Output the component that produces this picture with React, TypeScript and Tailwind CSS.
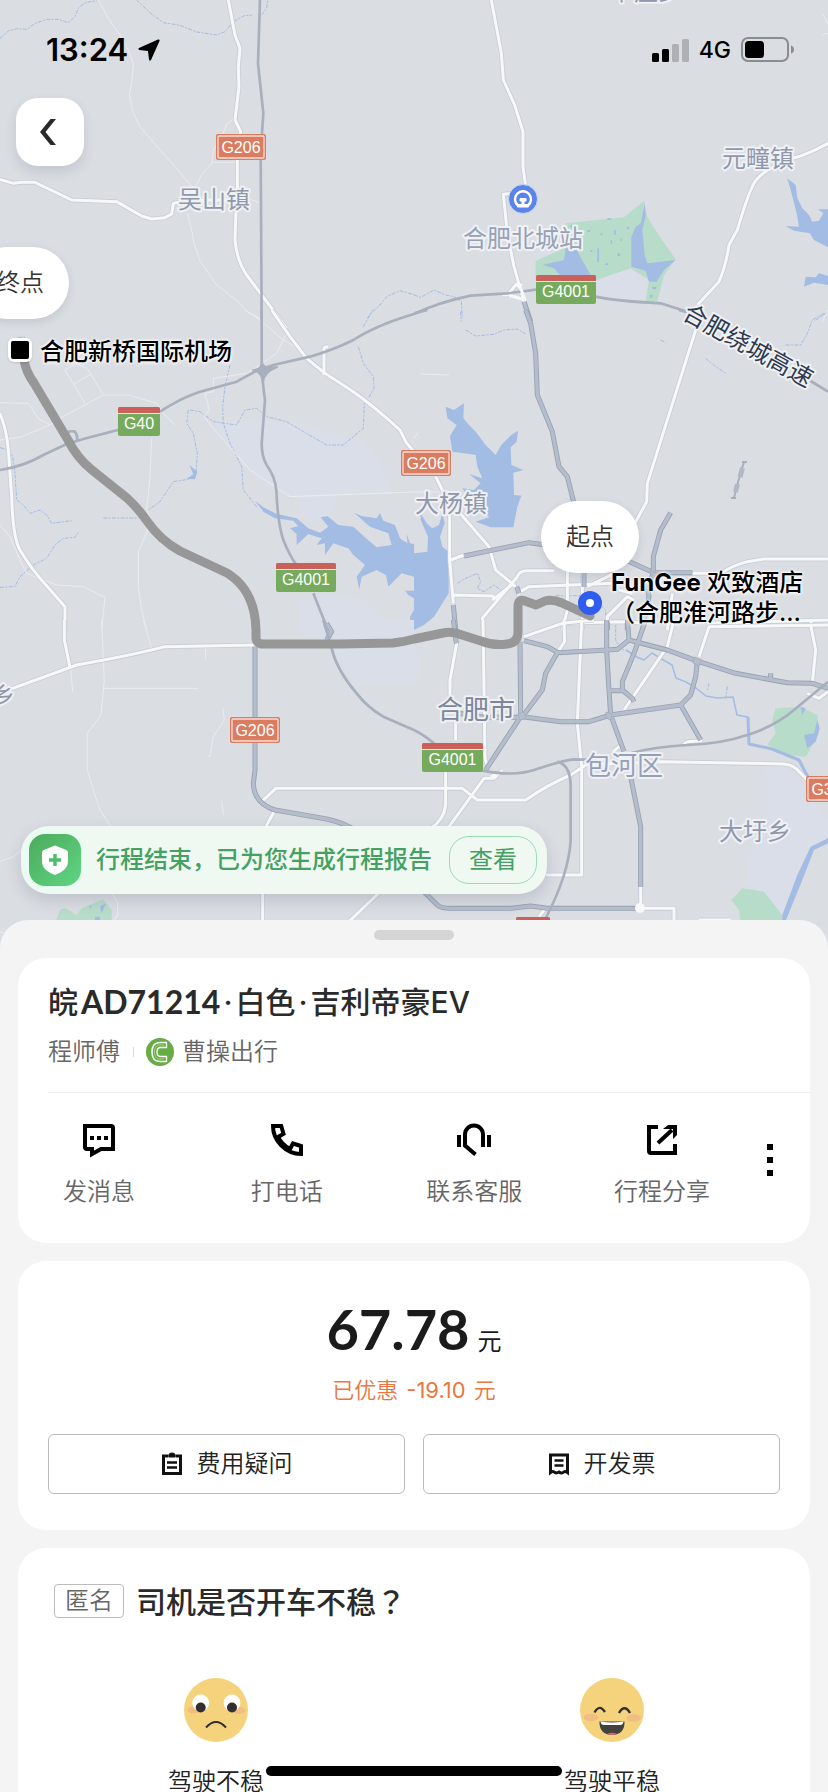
import type { ReactNode } from "react"

const CJK = "font-['Inter','Noto_Sans_CJK_SC',sans-serif]"

type Sheet = {
  x: number
  y: number
  areas?: string
  parks?: string
  water?: string
  streams?: string
  lanes?: string
  highways?: string
  roads?: string
  trunks?: string
}

// The map is stored as sheets drawn at triple size
const sheets: Sheet[] = [
  {
    x: 0,
    y: 0,
    streams:
      "M0 115 25 93 50 86 80 88 105 70 140 58 175 58 205 68 225 50 235 25 255 8 290 2M410 0 450 38 490 68 540 76 590 96 650 105 675 95 700 65 735 46 755 46M785 45 800 25 803 0M1102 955 1118 935 1140 915 1160 890 1200 872 1242 884",
    lanes:
      "M295 0 325 55 360 105 385 150 400 190 395 250 388 285 400 340 420 380 480 450 530 505 575 560M588 556 608 520 635 490 640 450 665 410 682 370 705 352M635 487H712M562 640 575 690 582 730 600 782 650 855 715 905 740 935 780 955M750 598 785 610",
    roads:
      "M685 0 705 105 720 145 715 200 717 260 705 360 722 395 712 450 712 560 707 660 705 720Q710 780 740 825L800 905 860 985M0 538 40 550 65 547H105L215 600 350 605 425 648 455 657 495 653 515 642 520 610 560 600H700",
    highways: "M780 0 774 190 790 340 782 460 785 960",
  },
  {
    x: 414,
    y: 0,
    areas: "M365 780 380 735 440 720 650 800 695 850 690 905 545 885 365 860Z",
    parks:
      "M365 782 440 750 455 670 630 652 690 603 700 650 730 700 785 778 750 825 730 905H695L705 840 650 805 548 840 365 840Z",
    water:
      "M385 795 450 780 455 745 485 745 510 790 530 825 440 828 420 805ZM652 710 665 680 680 670 692 610 695 650 685 690 692 765 700 790 785 780 750 810 728 845H705L695 812 652 800ZM480 700h4v10h-4zM550 745h5v40h-5zM520 690h8v6h-8zM600 690h5v14h-5zM610 760h8v8h-8zM580 655h12v5h-12zM560 700h5v6h-5zM640 680h5v8h-5zM590 720h4v12h-4zM575 790h8v5h-8zM530 750h5v6h-5zM470 675h5v9h-5zM620 715h4v8h-4zM715 860h12v8h-12zM708 885h8v8h-8zM1115 678 1155 680 1148 640 1138 600 1130 570 1120 535 1145 555 1150 595 1165 625 1185 645 1195 665 1215 662 1228 640 1212 628H1242V742L1200 720 1188 700 1140 692ZM1170 860 1175 830 1205 832 1215 820 1242 828V855L1200 848Z",
    streams: "M0 885 20 892 60 870 95 885 120 890 142 905 145 950M1205 960 1242 935",
    roads:
      "M232 0 262 160 268 240 302 315 327 395 327 500 335 560M290 580 268 583 280 700 300 800 330 905M325 855 305 855 280 885 265 885M1242 430Q1180 465 1135 475L1080 500Q1030 525 1015 560 1000 590 970 690L945 735Q935 800 915 845L850 915",
    trunks: "M330 905 350 965",
    highways: "M0 942Q80 905 170 887L280 880 390 866 545 890Q600 903 740 910L820 935",
    lanes: "M1225 40 1242 70M1225 105 1242 100",
  },
  {
    x: 0,
    y: 310,
    areas:
      "M640 335 790 330 900 340 1085 395 1130 440 1170 545 1010 560 990 620 910 630 890 565 780 520 700 430ZM895 870 1040 850 1090 870 1200 960 1242 1000 1235 1115 1070 1125 1000 1010 895 960Z",
    streams:
      "M55 82H75M0 413 25 420 38 440 45 490 50 570 70 585 90 610 120 600 140 615 155 640 215 632M310 624H415M0 832 45 830 60 800 100 765 140 745 165 705 190 685 225 682 237 665M565 300 560 340 580 370 592 430 588 490 565 508 520 515 500 545 480 575 445 600M690 165 675 230 668 290 670 340 690 400 725 470 730 540 770 590M570 300 600 305 640 335 710 345 735 300 770 295 800 320 860 335 910 365 980 405H1030L1090 355 1093 280M1075 110 1090 160 1120 200 1122 235 1105 265M1090 50 1118 0",
    water:
      "M765 572 790 592 830 612 890 625 925 655 960 668 985 650 962 622 982 618 1015 645 1060 650 1110 695 1130 712 1175 705 1165 670 1110 650 1062 608 1085 618 1130 625 1140 610 1150 632 1185 645 1200 685 1222 700 1220 672 1230 700 1242 702V800L1205 790 1165 830 1158 795 1130 780 1085 800 1078 838 1070 800 1095 765 1060 735 1045 715 1000 700 975 735V700L950 705 965 685 925 672 890 705 890 672 870 655 895 648 880 632 825 625 790 605ZM568 465 592 485 585 508 560 507 580 492ZM1215 842 1242 842V865L1225 855ZM1230 920 1242 900V945L1232 940Z",
    lanes:
      "M195 180 255 280M195 180 230 160 265 180 310 255M222 222 272 193M180 325 310 255 385 255 420 265 470 280 490 310 525 345M0 278 85 280 115 325 150 345M0 390 60 382 150 345 180 325M455 385 450 500 440 600 450 625 440 670 415 725 415 830 425 900 440 960M0 645 30 680 60 750 80 790 170 825 250 830 315 862 305 960M780 165 740 190 640 205V245L615 250 628 300 612 318 640 355 750 480 870 560 1242 546M735 0 780 30 850 90 905 120M860 70 830 130 780 165",
    roads:
      "M0 310Q20 360 25 420L35 560Q38 680 60 720 90 770 120 805L195 890V960M815 0 870 80 920 145 975 190 1060 245Q1130 295 1200 360L1220 400 1245 428M972 195V120Q970 110 985 110",
    highways:
      "M785 0V150Q785 200 795 270L785 400Q785 440 800 465 825 500 829 540 833 640 850 690 870 740 890 765M940 850 980 950M0 480Q70 470 130 435L200 402 250 387 365 357M480 305Q540 265 600 245L710 215 770 182 820 165 930 140Q1000 120 1060 90 1130 45 1242 12M195 375Q205 360 225 365 235 380 230 390",
  },
  {
    x: 414,
    y: 310,
    streams:
      "M140 5 142 35M155 60 185 78 240 73 270 60 310 57 335 72M740 90 755 98M875 145 905 170 935 190M1115 105 1160 105 1180 70 1195 30 1235 8M130 820 155 805 190 790 200 815 190 835 210 845 240 825 275 850M425 857H500M560 885 575 900V925",
    lanes: "M18 192 105 195M0 385 12 367M0 546H100M1242 0 1225 35",
    water:
      "M95 290 120 300 138 288 150 280 148 325 165 345 185 365 215 405 245 435 262 405 292 375 312 362 308 395 290 412 292 465 328 480 298 488 300 555 322 557 310 590 298 652 230 652 185 635 225 622 205 590 170 570 145 535 180 540 200 520 165 492 205 505 190 470 185 435 150 430 115 425 108 378 128 345 100 325ZM20 610 38 640 55 655 75 645 85 610 92 640 78 680 85 710 104 725 104 850 60 920 30 945 0 960V730L40 725 42 680 20 630Z",
    parks: "M35 840 65 820 75 850 55 895 40 895 30 870Z",
    roads:
      "M65 500 95 560 225 710 245 780 300 825 315 855M107 610V750L118 880M110 750 150 735M845 60 700 520 698 575 660 645M120 855 235 858 245 865M205 960V925L310 800Q315 782 340 782H420M310 850 345 830 600 820M460 770V900L445 960M520 830 600 790M445 940 620 935 700 940M505 780V960M660 870 640 860 580 920V960M880 940 1242 930M775 850 760 960M655 850 615 840M725 790H920Q960 765 1000 755L1050 747H1242M1190 930 1195 960M300 820 235 870",
    trunks:
      "M335 0 350 40 365 130 370 255 415 365 435 470 460 500 480 580M150 738 345 698 390 704M640 752 720 788H835M770 608 740 660 718 740V790L700 830 705 860 685 960M510 790V830M118 885 125 960M315 850 308 830M580 935V960M640 940V960",
    highways: "M0 10 40 0M1185 210 1242 245M795 0 815 6",
  },
  {
    x: 0,
    y: 620,
    areas: "M895 0H1242V190L1065 195 1020 130 1000 90 895 30Z",
    parks: "M168 902 180 870 195 863 230 885 245 865 310 838 335 870V902Z",
    water: "M300 860 318 850 305 880ZM285 890h15v12h-15zM268 858h6v5h-6z",
    lanes:
      "M305 0 310 120 313 180 303 285 262 340 262 450 280 510 300 570 332 618M310 205H595M617 85V120M430 0 455 85M212 145 218 215M668 262 673 300 640 350 630 410 622 405M665 543 670 585M0 725 40 710 65 690M335 820 353 845V885L340 902M0 935 15 940",
    roads: "M193 0V60L210 142M30 208 230 135Q400 105 495 80L765 75M825 505H1242M785 545 830 503M825 570 795 625M788 820V905M1135 820 1050 902",
    trunks: "M765 80V450L760 490Q762 550 825 570L980 597Q1040 610 1080 640M980 10 995 35 980 60",
    highways: "M970 0 995 85Q1010 150 1070 220 1100 260 1150 290L1242 330",
  },
  {
    x: 414,
    y: 620,
    areas: "M1055 440 1110 438 1180 500 1210 560 1242 600V650L1195 690 1105 890 1020 800 990 790 1020 650 1065 560ZM0 90 14 95V180L0 190Z",
    parks:
      "M1085 265 1160 260 1210 285 1215 340 1190 385 1175 410 1125 405 1060 375 1085 340 1075 300ZM952 840 985 805 1050 815 1105 885 1110 902H980L975 870Z",
    water:
      "M1105 885 1150 765 1190 680 1242 655V670L1200 690 1165 780 1115 902H1105ZM1170 345 1200 340 1210 300 1217 325 1205 365 1180 385ZM1160 260 1175 265 1165 285ZM0 0H14L0 15Z",
    streams: "M605 0V60L620 85 635 92M885 190 880 210M940 200 935 235",
    roads:
      "M130 60 108 180V225M125 300V360M207 0 213 410Q215 435 228 440M330 50 445 10 540 0M450 0 452 65 435 90M503 0 490 310 503 440V765H395M780 0 760 80 630 270M855 110 885 20 1242 15M1190 15 1205 90 1195 190M1180 220 1215 235 1242 215M800 380 820 365 865 362M635 395 615 380 597 395M230 470 265 455M265 450 240 475 210 475 105 620M0 505H145L190 540H335Q400 495 470 465L515 435 740 425 1110 432Q1140 435 1155 455L1185 485M95 455V555Q90 600 50 625M680 800V870M660 865H780V902M400 858 375 890M855 900H950",
    trunks:
      "M118 0 127 70M318 65 320 290 215 450M330 62 400 80 432 98 580 90 610 88 645 60 760 90 855 125 965 160 1120 188 1195 190 1242 205M432 95 395 160 385 210 325 290 440 305H525L590 285 800 255 830 225 845 170 850 125M578 0V90L585 210 590 285 630 395M640 0 645 60M695 0 660 100 625 185V212H590M625 210 655 235 660 245M800 255 860 360M135 280 210 292H325M650 470 680 620V800M30 815 70 855Q80 865 110 865H290L350 858 400 865H670M1070 160V175",
    highways:
      "M0 330Q40 350 70 380M205 452Q300 470 360 450 450 420 480 418L560 420M650 400Q720 380 820 375 920 372 1000 345 1080 320 1140 270L1242 185M430 425Q470 435 470 500V660Q465 760 395 895",
  },
]

const placeNames = [
  { name: "下庄乡", x: 610, y: 0, className: "text-2xl", fill: "#8f98ab" },
  { name: "吴山镇", x: 178, y: 208, className: "text-2xl", fill: "#8f98ab" },
  { name: "元疃镇", x: 722, y: 167, className: "text-2xl", fill: "#8f98ab" },
  { name: "合肥北城站", x: 463, y: 247, className: "text-2xl", fill: "#97a1b6" },
  { name: "大杨镇", x: 415, y: 512, className: "text-2xl", fill: "#8f98ab" },
  { name: "合肥市", x: 437, y: 719, className: "text-[26px]", fill: "#7d879b" },
  { name: "包河区", x: 585, y: 775, className: "text-[26px]", fill: "#94a0b8" },
  { name: "大圩乡", x: 719, y: 840, className: "text-2xl", fill: "#8f98ab" },
  { name: "乡", x: -9, y: 704, className: "text-2xl", fill: "#8f98ab" },
]

function NationalShield({ x, y, label }: { x: number; y: number; label: string }) {
  return (
    <g transform={`translate(${x} ${y})`}>
      <rect width="50" height="26" rx="2" fill="#d97c60" />
      <rect x="2" y="2" width="46" height="22" rx="1" fill="none" stroke="#f5ddd5" strokeWidth="1.3" />
      <text x="25" y="19" textAnchor="middle" fill="#fff" className="font-['Liberation_Sans',sans-serif] text-base">
        {label}
      </text>
    </g>
  )
}

function ExpressShield({ x, y, width, label }: { x: number; y: number; width: number; label?: string }) {
  return (
    <g transform={`translate(${x} ${y})`}>
      <rect width={width} height="29" rx="2" fill="#76ab5d" />
      <path d={`M0 6V2Q0 0 2 0H${width - 2}Q${width} 0 ${width} 2V6Z`} fill="#cb605b" />
      <path d={`M0 6.5H${width}`} stroke="#e9efe6" />
      {label && (
        <text x={width / 2} y="22" textAnchor="middle" fill="#fff" className="font-['Liberation_Sans',sans-serif] text-base">
          {label}
        </text>
      )}
    </g>
  )
}

function CityMap() {
  return (
    <svg
      className={`absolute inset-0 h-full w-full ${CJK}`}
      viewBox="0 0 828 950"
      preserveAspectRatio="xMidYMin slice"
      fill="none"
      strokeLinejoin="round"
      aria-label="行程地图"
    >
      <rect width="828" height="950" fill="#dadde2" />
      {sheets.map((s) => (
        <g key={`land-${s.x}-${s.y}`} transform={`translate(${s.x} ${s.y}) scale(0.33333)`}>
          <path d={s.areas} fill="#dadee8" />
          <path d={s.parks} fill="#b8dcca" />
          <path d={s.water} fill="#a3bce4" />
          <path d={s.streams} stroke="#a3bce4" strokeWidth="3" strokeDasharray="12 4 6 4" />
          <path d={s.lanes} stroke="#eaecee" strokeWidth="3" />
        </g>
      ))}
      {/* Nanfei river */}
      <path
        d="M626 650 637 657 644 660 652 653 660 658 672 665 676 678 686 682 696 688 706 696 717 698 733 697 737 715 748 717"
        stroke="#a3bce4"
        strokeWidth="1.5"
      />
      <path d="M748 717 749 744 772 749 799 760 809 779" stroke="#a3bce4" strokeWidth="3" />
      {sheets.map((s) => (
        <g key={`road-${s.x}-${s.y}`} transform={`translate(${s.x} ${s.y}) scale(0.33333)`}>
          <path d={s.roads} stroke="#c9ccd7" strokeWidth="14" />
          <path d={s.roads} stroke="#f7f9f9" strokeWidth="9" />
        </g>
      ))}
      {sheets.map((s) => (
        <g key={`trunk-${s.x}-${s.y}`} transform={`translate(${s.x} ${s.y}) scale(0.33333)`}>
          <path d={s.trunks} stroke="#98a1b0" strokeWidth="15" />
          <path d={s.trunks} stroke="#b4bdcc" strokeWidth="10" />
          <path d={s.highways} stroke="#a8afbd" strokeWidth="8" />
        </g>
      ))}
      {/* interchanges */}
      <path d="M253 370Q262 370 262 361 262 370 277 367 264 372 263 382 262 372 253 370Z" fill="#a8afbd" stroke="#a8afbd" strokeWidth="2" />
      <path d="M516 283 521 289 525 300 512 296 509 296" stroke="#f7f9f9" strokeWidth="3" />
      <path d="M518 714 524 712 526 718 520 720ZM606 712l6 2-1 6-5-2ZM650 570l8 4-6 5ZM694 657l8 3-3 6-6-3Z" fill="#b4bdcc" stroke="#a8afbd" />
      <circle cx="640" cy="908" r="5" fill="#f7f9f9" />
      <path d="M744 462 738 482 734 498M742 467 740 476M738 484 735 493" stroke="#a8b0bf" strokeWidth="2" />
      <path d="M742.500 468 740 477M737.500 484 735.500 492" stroke="#b0b8c6" strokeWidth="5" />
      <path d="M742 462h5M731 498h5" stroke="#a8b0bf" strokeWidth="2" />

      <path
        d="M24 360Q26 372 34 383L68 440Q77 458 92 470L127 498Q138 508 147 521 160 540 180 551L227 573Q255 590 256 630V637Q256 644 263 644L340 644 393 643Q403 642 414 639L443 633Q452 631 462 635L481 641Q494 646 507 644 518 643 518 632V607Q518 598 525 601L536 605 545 601Q552 599 562 603L590 616"
        stroke="#979797"
        strokeWidth="9"
        strokeLinecap="round"
      />

      <g stroke="#eff1f4" strokeWidth="4" paintOrder="stroke">
        {placeNames.map((p) => (
          <text key={p.name + p.x} x={p.x} y={p.y} fill={p.fill} className={p.className}>
            {p.name}
          </text>
        ))}
        <text x="681" y="318" transform="rotate(29 681 318)" fill="#2f3b4e" className="text-2xl">
          合肥绕城高速
        </text>
      </g>

      <circle cx="523" cy="199" r="14.5" fill="#5b84ea" stroke="#c9d6f4" />
      <path d="M518 205.500A8 8 0 1 1 528 205.500" stroke="#fff" strokeWidth="2.400" />
      <path d="M521.500 190.500h3M520 198.500h6v2.500h-2v3.500h4.500v2.500h-11v-2.500h4.500v-3.500h-2Z" fill="#fff" stroke="#fff" strokeWidth="1" />

      <NationalShield x={216} y={134} label="G206" />
      <NationalShield x={401} y={450} label="G206" />
      <NationalShield x={230} y={717} label="G206" />
      <NationalShield x={806} y={776} label="G312" />
      <ExpressShield x={536} y={275} width={60} label="G4001" />
      <ExpressShield x={118} y={407} width={42} label="G40" />
      <ExpressShield x={276} y={563} width={60} label="G4001" />
      <ExpressShield x={422} y={743} width={61} label="G4001" />
      <ExpressShield x={516} y={917} width={34} />
    </svg>
  )
}

function StatusBar() {
  return (
    <div className="relative flex h-[98px] items-center justify-between pt-0.5 pr-[34px] pl-[46px] text-black">
      <div className="flex items-center gap-2.5">
        <span className="text-[31px] leading-10 font-semibold">13:24</span>
        <svg width="22" height="22" viewBox="0 0 22 22">
          <path d="M20 .5 1 9Q-.5 10.500 1.500 11L10 12 11 20.500Q11.500 22.500 13 21L21.500 2Q22 0 20 .5Z" />
        </svg>
      </div>
      <div className="flex items-center gap-2.5">
        <svg width="37" height="24" viewBox="0 0 37 24">
          <rect y="15" width="7" height="9" rx="1.500" />
          <rect x="10" y="11" width="7" height="13" rx="1.500" />
          <rect x="20" y="6" width="7" height="18" rx="1.500" fill="#aeb0b5" />
          <rect x="30" y="1" width="7" height="23" rx="1.500" fill="#aeb0b5" />
        </svg>
        <span className="text-[23px] leading-8 font-medium">4G</span>
        <svg width="53" height="26" viewBox="0 0 53 26">
          <rect x="1" y="1" width="46" height="23" rx="6" fill="none" stroke="#8a8c90" strokeWidth="2" />
          <rect x="4" y="4" width="19" height="17" rx="3.500" />
          <path d="M50 8.500Q53 9.500 53 12.500T50 16.500Z" fill="#8a8c90" />
        </svg>
      </div>
    </div>
  )
}

function ReportBanner() {
  return (
    <div className="relative ml-[21px] flex h-[68px] w-fit items-center rounded-[28px] bg-[#eff9f2] pr-2.5 pl-2 shadow-[0_6px_16px_rgba(70,80,110,0.2)]">
      <svg width="52" height="52" viewBox="0 0 52 52" className="rounded-2xl shadow-[0_0_6px_2px_#e3fff0]">
        <defs>
          <linearGradient id="report" x1="0" y1="0" x2="1" y2="1">
            <stop stopColor="#4bab5b" />
            <stop offset="1" stopColor="#60d584" />
          </linearGradient>
        </defs>
        <rect width="52" height="52" fill="url(#report)" />
        <path d="M26 11.500 36 15.500Q39 16 39 19V27C39 34 34 38 26 41 18 38 13 34 13 27V19Q13 16 16 15.500Z" fill="#fff" />
        <path d="M26 20V32M20 26H32" stroke="#50bd6c" strokeWidth="3.500" />
      </svg>
      <p className="ml-[15px] text-2xl leading-8 font-medium whitespace-nowrap text-[#45a063]">
        行程结束，已为您生成行程报告
      </p>
      <button className="ml-[17px] h-12 w-[88px] rounded-[20px] border border-[#9cdcb2] text-2xl leading-8 text-[#45a063]">
        查看
      </button>
    </div>
  )
}

function Action({ label, children }: { label: string; children: ReactNode }) {
  return (
    <button className="flex w-24 flex-col items-center gap-5">
      <svg width="32" height="32" viewBox="0 0 32 32" fill="none" stroke="#000" strokeWidth="4" className="overflow-visible">
        {children}
      </svg>
      <span className="text-2xl leading-8 font-[350] whitespace-nowrap text-[#666]">{label}</span>
    </button>
  )
}

function DriverCard() {
  return (
    <section className="rounded-[28px] bg-white pt-6 pb-[35px]">
      <div className="pl-[30px]">
        <h1 className="flex items-center gap-[3px] text-[30px] leading-10 font-medium text-[#2a2a2a]">
          <span>皖</span>
          <span className="font-['Lato',sans-serif] text-[32px] font-bold">AD71214</span>
          <span>·</span>
          <span>白色</span>
          <span>·</span>
          <span>吉利帝豪EV</span>
        </h1>
        <div className="mt-3.5 flex items-center border-b border-[#eee] pb-6 text-2xl leading-8 font-[350] text-[#666]">
          <span>程师傅</span>
          <span className="mr-3 ml-[13px] h-2.5 w-px bg-[#ddd]" />
          <svg width="28" height="28" viewBox="0 0 28 28" fill="none">
            <circle cx="14" cy="14" r="14" fill="#68ac45" />
            <path d="M21 4.500H14C8.500 4.500 6 8.500 6 14S8.500 23.500 14 23.500H21" stroke="#fff" strokeWidth="1.500" />
            <path d="M20.500 4.500V9.500H14.500C12 9.500 11 11.500 11 14S12 18.500 14.500 18.500H20.500V23.500" stroke="#fff" strokeWidth="1.300" />
            <path d="M18 7H14C10 7 8.500 10 8.500 14S10 21 14 21H18" stroke="#b9dba5" strokeWidth=".8" />
          </svg>
          <span className="ml-2">曹操出行</span>
        </div>
      </div>
      <div className="flex items-center pt-[31px] pl-[33px]">
        <div className="flex flex-1 justify-between">
          <Action label="发消息">
            <path d="M2 2H28Q30 2 30 4V25H18L9 30V25H4Q2 25 2 23Z" />
            <path d="M7 14H11M14 14H18M21 14H25" />
          </Action>
          <Action label="打电话">
            <path d="M2 2H10.200L12.500 9.800 7 13C9.500 18 14 22.500 19 25L22 19.500 30 22V30C15 30 2 17 2 2Z" />
          </Action>
          <Action label="联系客服">
            <path d="M25 23V10.500A9 9 0 0 0 7 10.500V21.500L17.500 30.500" />
            <path d="M1 11V23M31 11V23" />
          </Action>
          <Action label="行程分享">
            <path d="M12 3H3V27Q3 29 5 29H29V20M12 19 26 6" />
            <path d="M17 5 22 1H31V11L27 15V5Z" fill="#000" stroke="none" />
          </Action>
        </div>
        <button aria-label="更多" className="ml-5 flex w-20 flex-col items-center gap-[7px] self-start pt-5">
          <span className="size-1.5 bg-black" />
          <span className="size-1.5 bg-black" />
          <span className="size-1.5 bg-black" />
        </button>
      </div>
    </section>
  )
}

function FareCard() {
  const button =
    "flex h-[60px] items-center justify-center gap-3 rounded-md border border-[#bbb] text-2xl leading-8 font-[350] text-[#222]"
  return (
    <section className="rounded-[28px] bg-white px-[30px] pt-9 pb-9">
      <div className="flex h-16 items-baseline justify-center gap-2 text-[#1b1b1b]">
        <span className="font-['Lato',sans-serif] text-[56px] leading-16 font-bold">67.78</span>
        <span className="text-2xl leading-8">元</span>
      </div>
      <p className="mt-[13px] flex justify-center gap-2 text-[22px] leading-8 font-[350] text-[#ea7640]">
        <span>已优惠</span>
        <span className="font-normal">-19.10</span>
        <span>元</span>
      </p>
      <div className="mt-7 grid grid-cols-2 gap-[18px]">
        <button className={button}>
          <svg width="24" height="24" viewBox="0 0 24 24" fill="none" stroke="#111">
            <path d="M7.500 4H2.500V21.500H19.500V4H14.500" strokeWidth="3" />
            <path d="M8 5V3Q8 1 11 1T14 3V5Z" fill="#111" strokeWidth="1" />
            <path d="M6 10.500H16M6 15.500H16" strokeWidth="2.500" />
          </svg>
          费用疑问
        </button>
        <button className={button}>
          <svg width="24" height="24" viewBox="0 0 24 24" fill="none" stroke="#111">
            <path d="M2.500 20.500V3H19.500V20.500Q17 18.500 15 20.500 13 21.500 11 20 8.500 21.500 7 20.500 5 18.500 2.500 20.500Z" strokeWidth="3" />
            <path d="M6.500 8.500H15.500M6.500 13.500H15.500" strokeWidth="2.500" />
          </svg>
          开发票
        </button>
      </div>
    </section>
  )
}

function SurveyCard() {
  return (
    <section className="rounded-[28px] bg-white pt-8 pb-8">
      <div className="flex items-center gap-3 pl-9">
        <span className="rounded border border-[#bbb] px-2.5 text-2xl leading-8 font-[350] text-[#666]">匿名</span>
        <h2 className="text-[30px] leading-10 font-medium text-[#2a2a2a]">
          司机是否开车不稳<span className="font-['Noto_Sans_CJK_TC',sans-serif]">？</span>
        </h2>
      </div>
      <div className="mt-14 grid grid-cols-2">
        <button className="flex flex-col items-center gap-6 text-2xl leading-8 font-[350] text-[#222]">
          <svg width="64" height="64" viewBox="0 0 64 64">
            <circle cx="32" cy="32" r="32" fill="#f5d37c" />
            <ellipse cx="10" cy="32" rx="7" ry="3.500" fill="#f1bd82" />
            <ellipse cx="54.500" cy="32.500" rx="7" ry="3.500" fill="#f1bd82" />
            <circle cx="16.700" cy="25" r="8.400" fill="#fff" />
            <circle cx="48" cy="25" r="8.400" fill="#fff" />
            <circle cx="16.700" cy="29.500" r="5" fill="#322f33" />
            <circle cx="48" cy="29.500" r="5" fill="#322f33" />
            <path d="M22 49.500Q32 38.500 42 49.500" fill="none" stroke="#322f33" strokeWidth="2" />
          </svg>
          驾驶不稳
        </button>
        <button className="flex flex-col items-center gap-6 text-2xl leading-8 font-[350] text-[#222]">
          <svg width="64" height="64" viewBox="0 0 64 64">
            <circle cx="32" cy="32" r="32" fill="#f5d37c" />
            <ellipse cx="11" cy="39.500" rx="7.300" ry="3.800" fill="#f1bd82" />
            <ellipse cx="53.500" cy="40" rx="7.300" ry="3.800" fill="#f1bd82" />
            <path d="M14.500 34.500Q19.500 25.500 25 34M39 35Q44.500 25.500 50 35" fill="none" stroke="#322f33" strokeWidth="2.400" />
            <path d="M19.500 43.500H44.500C45 52 40 57 32 57S19 52 19.500 43.500Z" fill="#44423f" />
            <path d="M20.500 43.500Q32 45.500 43.500 43.500 43 47 40 47H24Q21 47 20.500 43.500Z" fill="#fff" />
            <path d="M27 56Q32 53.500 37 56 32 58 27 56Z" fill="#d86a6a" />
          </svg>
          驾驶平稳
        </button>
      </div>
    </section>
  )
}

export default function App() {
  const pill =
    "absolute flex h-[72px] w-[98px] items-center justify-center rounded-full bg-white text-2xl leading-8 font-[350] text-[#333] shadow-[0_3px_8px_rgba(70,80,110,0.15)]"
  const pinName =
    "absolute text-2xl leading-[30px] font-medium whitespace-nowrap text-black [text-shadow:0_0_3px_#fff,0_0_3px_#fff,0_1px_4px_#fff]"
  return (
    <div className={`relative h-screen overflow-hidden bg-[#f4f4f4] ${CJK}`}>
      <div className="relative flex h-[950px] flex-col overflow-hidden pb-14">
        <CityMap />

        <div className={`${pill} top-[247px] -left-[29px]`}>终点</div>
        <div className="absolute top-[338px] left-2 flex size-6 items-center justify-center rounded-md bg-white shadow">
          <span className="size-[18px] rounded-xs bg-black" />
        </div>
        <div className={`${pinName} top-[337px] left-10`}>合肥新桥国际机场</div>

        <div className={`${pill} top-[501px] left-[541px]`}>起点</div>
        <div className="absolute top-[591px] left-[578px] flex size-6 items-center justify-center rounded-full bg-[#315cf0]">
          <span className="size-2 rounded-full bg-white" />
        </div>
        <div className={`${pinName} top-[568px] left-[611px]`}>
          <span className="font-bold">FunGee</span> 欢致酒店
          <br />
          （合肥淮河路步…
        </div>

        <StatusBar />
        <button
          aria-label="返回"
          className="relative ml-4 flex size-[68px] items-center justify-center rounded-[22px] bg-white pr-1 shadow-[0_6px_12px_rgba(70,80,110,0.15)]"
        >
          <svg width="16" height="28" viewBox="0 0 16 28">
            <path d="M10.500 1H16L5.500 14 16 27H10.500L0 14Z" fill="#2a2a2a" />
          </svg>
        </button>
        <div className="flex-1" />
        <ReportBanner />
      </div>

      <main className="relative -mt-[30px] rounded-t-[28px] bg-[#f4f4f4] px-[18px] pt-2.5">
        <div className="mx-auto h-2.5 w-20 rounded-full bg-[#d5d5d5]" />
        <div className="mt-[18px] flex flex-col gap-[18px]">
          <DriverCard />
          <FareCard />
          <SurveyCard />
        </div>
      </main>

      <div className="absolute bottom-4 left-1/2 h-2.5 w-[296px] -translate-x-1/2 rounded-full bg-black" />
    </div>
  )
}
